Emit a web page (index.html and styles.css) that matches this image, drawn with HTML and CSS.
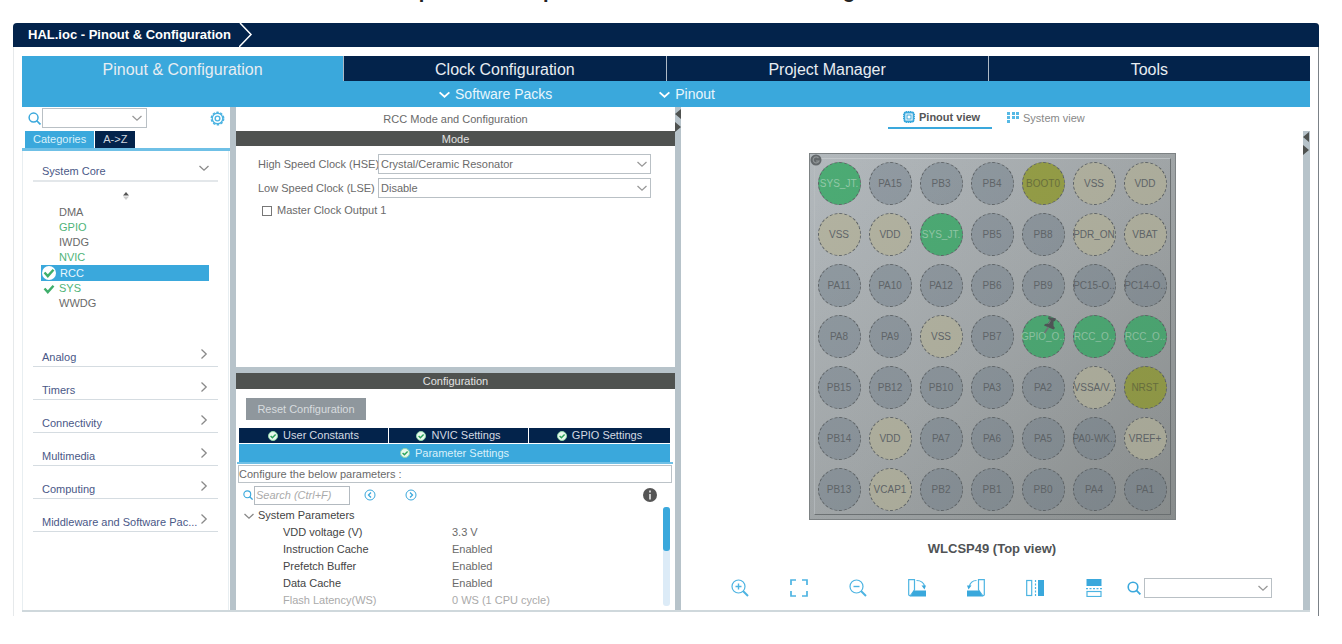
FILE: index.html
```html
<!DOCTYPE html>
<html lang="en">
<head>
<meta charset="utf-8">
<title>HAL.ioc - Pinout &amp; Configuration</title>
<link rel="stylesheet" href="styles.css">
</head>
<body>
<svg class="defs" aria-hidden="true">
  <symbol id="down" viewBox="0 0 12 12"><path d="M1.500 4l4.500 4.200L10.500 4" fill="none" stroke="currentColor" stroke-width="1.300"/></symbol>
  <symbol id="right" viewBox="0 0 12 12"><path d="M3.500 1.500L8.200 6l-4.700 4.500" fill="none" stroke="currentColor" stroke-width="1.300"/></symbol>
  <symbol id="search" viewBox="0 0 14 14"><circle cx="6" cy="6" r="4.800" fill="none" stroke="currentColor" stroke-width="1.600"/><path d="M9.400 9.400l4 4" stroke="currentColor" stroke-width="1.800"/></symbol>
  <symbol id="ok" viewBox="0 0 10 10"><circle cx="5" cy="5" r="4.500" fill="#eaf8ee" stroke="#8fd6aa"/><path d="M2.600 5l1.800 1.800L7.600 3.400" fill="none" stroke="#2aa35a" stroke-width="1.400"/></symbol>
  <symbol id="tick" viewBox="0 0 12 12"><path d="M1.500 5.500l3.300 3.600 5.700-6.400" fill="none" stroke="#3fae6b" stroke-width="2.400"/></symbol>
</svg>
<div class="heading"><span>p</span><span>p</span><span>g</span></div>
<div class="window">
  <header class="titlebar">
    <span>HAL.ioc - Pinout &amp; Configuration</span>
    <svg class="crumb" viewBox="0 0 14 24"><path d="M1 0l11 11.500L0 24" fill="none" stroke="#fff" stroke-width="1.500"/></svg>
  </header>
  <div class="content">
    <nav class="tabs">
      <button class="tab active">Pinout &amp; Configuration</button>
      <button class="tab">Clock Configuration</button>
      <button class="tab">Project Manager</button>
      <button class="tab">Tools</button>
    </nav>
    <div class="menus">
      <button class="menu"><svg viewBox="0 0 12 12"><path d="M1.500 4l4.500 4 4.500-4" fill="none" stroke="#fff" stroke-width="1.700"/></svg>Software Packs</button>
      <button class="menu"><svg viewBox="0 0 12 12"><path d="M1.500 4l4.500 4 4.500-4" fill="none" stroke="#fff" stroke-width="1.700"/></svg>Pinout</button>
    </div>
    <main class="panes">
      <aside class="side">
        <div class="side-search">
          <svg class="lens"><use href="#search"/></svg>
          <div class="combo side-combo"><input type="text" aria-label="Search peripherals"><svg class="arrow"><use href="#down"/></svg></div>
          <button class="gear" aria-label="Settings"><svg viewBox="0 0 16 16" fill="none" stroke="#4db4e2"><circle cx="8" cy="8" r="6.600" stroke-width="1.600" stroke-dasharray="2.600 1.550"/><circle cx="8" cy="8" r="5.600" stroke-width="1.400"/><circle cx="8" cy="8" r="2.500" stroke-width="1.500"/></svg></button>
        </div>
        <div class="side-tabs"><button class="on">Categories</button><button>A-&gt;Z</button></div>
        <div class="cats">
          <button class="cat first">System Core<svg><use href="#down"/></svg></button>
          <div class="sorter"><svg viewBox="0 0 8 10"><path d="M4 1l3 3.500H1z" fill="#555"/><path d="M4 9l3-3.500H1z" fill="#ccc"/></svg></div>
          <ul class="periphs">
            <li>DMA</li>
            <li class="green">GPIO</li>
            <li>IWDG</li>
            <li class="green">NVIC</li>
            <li class="selected"><i class="disc"><svg><use href="#tick"/></svg></i>RCC</li>
            <li class="green"><i><svg><use href="#tick"/></svg></i>SYS</li>
            <li>WWDG</li>
          </ul>
          <button class="cat">Analog<svg><use href="#right"/></svg></button>
          <button class="cat">Timers<svg><use href="#right"/></svg></button>
          <button class="cat">Connectivity<svg><use href="#right"/></svg></button>
          <button class="cat">Multimedia<svg><use href="#right"/></svg></button>
          <button class="cat">Computing<svg><use href="#right"/></svg></button>
          <button class="cat">Middleware and Software Pac...<svg><use href="#right"/></svg></button>
        </div>
      </aside>
      <div class="splitter"></div>
      <section class="middle">
        <div class="mode">
          <h2 class="pane-title">RCC Mode and Configuration</h2>
          <h3 class="bar">Mode</h3>
          <div class="form">
            <label for="hse">High Speed Clock (HSE)</label>
            <div class="combo"><select id="hse"><option>Crystal/Ceramic Resonator</option></select><svg class="arrow"><use href="#down"/></svg></div>
            <label for="lse">Low Speed Clock (LSE)</label>
            <div class="combo"><select id="lse"><option>Disable</option></select><svg class="arrow"><use href="#down"/></svg></div>
          </div>
          <label class="check"><input type="checkbox">Master Clock Output 1</label>
        </div>
        <div class="hsplit"></div>
        <div class="config">
          <h3 class="bar tall">Configuration</h3>
          <button class="reset">Reset Configuration</button>
          <div class="ctabs">
            <button><svg><use href="#ok"/></svg>User Constants</button>
            <button><svg><use href="#ok"/></svg>NVIC Settings</button>
            <button><svg><use href="#ok"/></svg>GPIO Settings</button>
            <button class="on"><svg><use href="#ok"/></svg>Parameter Settings</button>
          </div>
          <p class="hint">Configure the below parameters :</p>
          <div class="finder">
            <svg class="lens small"><use href="#search"/></svg>
            <input type="text" placeholder="Search (Ctrl+F)" aria-label="Search parameters">
            <button aria-label="Previous"><svg viewBox="0 0 12 12" fill="none" stroke="#3aa8dc"><circle cx="6" cy="6" r="5"/><path d="M7 3.500L4.500 6 7 8.500" stroke-width="1.300"/></svg></button>
            <button aria-label="Next"><svg viewBox="0 0 12 12" fill="none" stroke="#3aa8dc"><circle cx="6" cy="6" r="5"/><path d="M5 3.500L7.500 6 5 8.500" stroke-width="1.300"/></svg></button>
            <button class="info" aria-label="Information"><svg viewBox="0 0 14 14"><circle cx="7" cy="7" r="7" fill="#555"/><path d="M7 2.500v2M7 6v5.500" stroke="#ccc" stroke-width="2"/></svg></button>
          </div>
          <div class="params">
            <table>
              <tr><th colspan="2"><svg><use href="#down"/></svg>System Parameters</th></tr>
              <tr><td>VDD voltage (V)</td><td>3.3 V</td></tr>
              <tr><td>Instruction Cache</td><td>Enabled</td></tr>
              <tr><td>Prefetch Buffer</td><td>Enabled</td></tr>
              <tr><td>Data Cache</td><td>Enabled</td></tr>
              <tr class="off"><td>Flash Latency(WS)</td><td>0 WS (1 CPU cycle)</td></tr>
            </table>
            <div class="track"><div class="thumb"></div></div>
          </div>
        </div>
      </section>
      <div class="splitter"><svg class="grips" viewBox="0 0 6 24"><path d="M6 1v10L0 6zM0 14v10l6-5z" fill="#4f5250"/></svg></div>
      <section class="right">
        <div class="view">
          <div class="view-tabs">
            <button class="on"><svg viewBox="0 0 12 12" fill="none" stroke="#3aa8dc"><rect x="1.500" y="1.500" width="9" height="9" rx="1" stroke-width="1.800"/><rect x="4" y="4" width="4" height="4"/><path d="M3 .5h6M3 11.500h6M.5 3v6M11.500 3v6" stroke-dasharray="1 1"/></svg>Pinout view</button>
            <button><svg viewBox="0 0 12 12" fill="#56b9e5"><path d="M0 0h3v3H0zM0 4h3v3H0zM0 8h3v3H0zM5 0h3v3H5zM5 4h3v3H5zM9 0h3v3H9zM9 4h3v3H9z"/></svg>System view</button>
          </div>
          <div class="chip">
            <svg class="mark" viewBox="0 0 12 12"><circle cx="6" cy="6" r="5.500" fill="#63686b"/><path d="M8.500 4A3 3 0 1 0 9 7H6" fill="none" stroke="#8f9496" stroke-width="1.200"/></svg>
            <button class="g">SYS_JT.</button><button>PA15</button><button>PB3</button><button>PB4</button><button class="o">BOOT0</button><button class="y">VSS</button><button class="y">VDD</button>
            <button class="y">VSS</button><button class="y">VDD</button><button class="g">SYS_JT.</button><button>PB5</button><button>PB8</button><button class="y">PDR_ON</button><button class="y">VBAT</button>
            <button>PA11</button><button>PA10</button><button>PA12</button><button>PB6</button><button>PB9</button><button>PC15-O..</button><button>PC14-O..</button>
            <button>PA8</button><button>PA9</button><button class="y">VSS</button><button>PB7</button><button class="g pinned">GPIO_O..<svg viewBox="0 0 14 18"><path d="M5.500 1L13 2.500 12 5l-1.500.5L10.500 10l1.500 2-1.500 1.500L1 9.500 2 8l3-.500L7 4 5 2.500z" fill="#505557"/><path d="M5.500 11L1.500 17" stroke="#707678" stroke-width="1.600"/><path d="M7.500 4.500L5.500 8" stroke="#7d8385"/></svg></button><button class="g">RCC_O..</button><button class="g">RCC_O..</button>
            <button>PB15</button><button>PB12</button><button>PB10</button><button>PA3</button><button>PA2</button><button class="y">VSSA/V..</button><button class="o">NRST</button>
            <button>PB14</button><button class="y">VDD</button><button>PA7</button><button>PA6</button><button>PA5</button><button>PA0-WK..</button><button class="y">VREF+</button>
            <button>PB13</button><button class="y">VCAP1</button><button>PB2</button><button>PB1</button><button>PB0</button><button>PA4</button><button>PA1</button>
          </div>
          <p class="package">WLCSP49 (Top view)</p>
          <div class="tools">
            <button aria-label="Zoom in"><svg viewBox="0 0 18 18"><circle cx="7.500" cy="7.500" r="6.500"/><path d="M12 12l5 5" stroke-width="2"/><path d="M4.500 7.500h6M7.500 4.500v6" stroke-width="1.400"/></svg></button>
            <button aria-label="Fit"><svg viewBox="0 0 18 18"><path d="M1 6V1h5M12 1h5v5M17 12v5h-5M6 17H1v-5" stroke-width="1.700"/></svg></button>
            <button aria-label="Zoom out"><svg viewBox="0 0 18 18"><circle cx="7.500" cy="7.500" r="6.500"/><path d="M12 12l5 5" stroke-width="2"/><path d="M4.500 7.500h6" stroke-width="1.400"/></svg></button>
            <button aria-label="Rotate right"><svg viewBox="0 0 18 18"><path d="M6.500 11V.7H.7V16l2 1.300"/><path d="M6.500 11L2 17" /><path d="M5.500 11.500H18v6H2.500z" fill="#3aa8dc" stroke="none"/><path d="M8.500 1.500q7 0 8 6"/><path d="M13.500 6.500H18l-1.500 4z" fill="#3aa8dc" stroke="none"/></svg></button>
            <button aria-label="Rotate left"><svg viewBox="0 0 18 18"><path d="M11.500 11V.7h5.800V16l-2 1.300"/><path d="M11.500 11l4.500 6"/><path d="M12.500 11.500H0v6h15.500z" fill="#3aa8dc" stroke="none"/><path d="M9.500 1.500q-6 0-7 6"/><path d="M4.500 6.500H0l1.500 4z" fill="#3aa8dc" stroke="none"/></svg></button>
            <button aria-label="Flip horizontally"><svg viewBox="0 0 18 18"><rect x=".7" y="1.500" width="5" height="15"/><path d="M9.500 1v16" stroke-dasharray="2 1.500"/><path d="M12 1h6v16h-6z" fill="#3aa8dc" stroke="none"/></svg></button>
            <button aria-label="Flip vertically"><svg viewBox="0 0 18 18"><path d="M1.500 0h15v7h-15z" fill="#3aa8dc" stroke="none"/><path d="M1 9.700h16" stroke-dasharray="2 1.500"/><rect x="2" y="12.500" width="14" height="5"/></svg></button>
            <div class="pin-search">
              <svg class="lens"><use href="#search"/></svg>
              <div class="combo"><input type="text" aria-label="Search pins"><svg class="arrow"><use href="#down"/></svg></div>
            </div>
          </div>
        </div>
        <div class="edge"><svg class="grips" viewBox="0 0 6 24"><path d="M6 1v10L0 6zM0 14v10l6-5z" fill="#4f5250"/></svg></div>
      </section>
    </main>
  </div>
</div>
</body>
</html>
```
FILE: styles.css
```css
* { box-sizing: border-box; }
body {
  margin: 0;
  background: #fff;
  color: #6a6a6a;
  font: 11px/15px "Liberation Sans", Arial, sans-serif;
}
button, input, select { font: inherit; color: inherit; margin: 0; }
button { border: 0; padding: 0; background: none; cursor: pointer; }
h2, h3, p, ul { margin: 0; padding: 0; font-size: 11px; font-weight: normal; }
ul { list-style: none; }
svg { display: block; flex: none; }
.defs { display: none; }

.heading {
  display: flex;
  align-items: flex-end;
  justify-content: center;
  gap: 112px;
  height: 2px;
  margin-bottom: 21px;
  padding-right: 68px;
  overflow: hidden;
  color: #222;
  font: bold 20px/22px "Liberation Sans", Arial, sans-serif;
}
.heading span:last-child { padding-left: 176px; }

.window {
  margin: 0 23px 28px 13px;
  border: 1px solid #e6e9eb;
  border-top: 0;
  border-right-color: #7b8187;
  border-bottom: 0;
  border-radius: 4px 4px 0 0;
}
.titlebar {
  display: flex;
  gap: 8px;
  height: 24px;
  margin: 0 -1px;
  padding-left: 15px;
  background: #03234b;
  border-radius: 4px 4px 0 0;
  color: #fff;
  font: bold 13px/24px "Liberation Sans", Arial, sans-serif;
}
.crumb { width: 14px; height: 24px; }
.content { padding: 9px 8px 4px; }

.tabs { display: grid; grid-template-columns: repeat(4, 1fr); gap: 1px; background: #aeb9c5; }
.tab { height: 25px; padding-top: 2px; background: #03234b; color: #e8edf2; font-size: 16px; line-height: 23px; }
.tab.active { background: #3aa8dc; }
.menus {
  display: flex;
  gap: 106px;
  height: 26px;
  padding-left: 32.3%;
  background: #3aa8dc;
}
.menu { display: flex; align-items: center; gap: 4px; color: #e9f6fc; font-size: 14px; }
.menu svg { width: 13px; height: 13px; }

.panes {
  display: grid;
  grid-template-columns: 208px 6px 439px 6px minmax(0, 1fr);
  border-bottom: 2px solid #cfd8dc;
}
.splitter, .hsplit, .edge { background: #b7c3ca; }
.hsplit { height: 6px; }
.grips { width: 6px; height: 24px; }
.splitter .grips { margin-top: 1px; }
.lens { width: 13px; height: 13px; color: #3aa8dc; }

.combo { position: relative; height: 20px; }
.combo input, .combo select {
  display: block;
  width: 100%;
  height: 100%;
  padding: 0 2px;
  border: 1px solid #b9c0c5;
  border-radius: 0;
  background: #fff;
  appearance: none;
  outline: 0;
}
.arrow { position: absolute; right: 3px; top: 4px; width: 12px; height: 12px; color: #999; pointer-events: none; }

.side { display: flex; flex-direction: column; }
.side-search { display: flex; align-items: center; gap: 1px; height: 24px; padding: 0 5px 2px 6px; }
.side-combo { width: 105px; }
.side-combo .arrow { right: 4px; }
.gear { margin-left: auto; }
.gear svg { width: 15px; height: 15px; }
.side-tabs { display: flex; gap: 1px; padding: 0 3px; border-bottom: 3px solid #6fc0e6; }
.side-tabs button { height: 17px; padding: 0 8px; background: #03234b; color: #cfd6df; }
.side-tabs .on { background: #3aa8dc; color: #d9f0fa; }
.cats { flex: 1; padding: 0 10px; margin-right: 1px; border: solid #e8eef1; border-width: 0 1px; }
.cat {
  display: flex;
  align-items: flex-end;
  justify-content: space-between;
  width: 100%;
  height: 33px;
  padding: 0 8px 1px 9px;
  border-bottom: 1px solid #d5dce1;
  color: #4a5887;
  white-space: nowrap;
}
.cat svg { width: 12px; height: 12px; margin-bottom: 5px; color: #8a8a8a; }
.cat.first { height: 31px; border-bottom: 2px solid #e3e7ea; }
.sorter { height: 22px; padding-top: 9px; }
.sorter svg { width: 8px; height: 10px; margin: 0 auto; }
.periphs { padding: 1px 9px 23px 8px; }
.periphs li { display: flex; align-items: center; height: 15px; padding-left: 18px; position: relative; }
.periphs .green { color: #4fb478; }
.periphs .selected { height: 16px; background: #3aa8dc; color: #e9f6fc; padding-left: 19px; }
.periphs i { position: absolute; left: 1px; top: 1px; padding: 1px; border-radius: 50%; }
.periphs .disc { background: #fff; }
.periphs svg { width: 12px; height: 12px; }

.pane-title { height: 24px; line-height: 25px; text-align: center; }
.bar { height: 15px; line-height: 16px; background: #4f5250; color: #e2e2e2; text-align: center; }
.tall { height: 16px; line-height: 17px; }
.mode { height: 260px; }
.form {
  display: grid;
  grid-template-columns: 120px minmax(0, 1fr);
  gap: 4px 0;
  align-items: center;
  padding: 8px 24px 0 22px;
}
.form label { white-space: nowrap; }
.check { display: flex; align-items: center; gap: 5px; padding: 5px 0 0 26px; }
.check input { width: 10px; height: 10px; appearance: none; border: 1px solid #777; background: #fff; }
.reset { display: block; width: 120px; height: 22px; margin: 9px 0 8px 10px; background: #8f979d; color: #d8dcdf; }
.ctabs {
  display: grid;
  grid-template-columns: 149px 139px minmax(0, 1fr);
  gap: 1px;
  margin: 0 2px 0 1px;
  padding: 0 3px 0 2px;
  border-bottom: 2px solid #6fc0e6;
}
.ctabs button { display: flex; align-items: center; justify-content: center; gap: 5px; height: 15px; background: #03234b; color: #d4dae2; }
.ctabs .on { grid-column: 1 / -1; height: 18px; background: #3aa8dc; color: #d9f0fa; }
.ctabs svg { width: 10px; height: 10px; }
.hint { height: 18px; margin: 1px 3px 0 2px; border: 1px solid #bcc3c8; line-height: 16px; }
.finder { display: flex; align-items: center; height: 24px; padding: 0 18px 0 7px; }
.small { width: 10px; height: 10px; margin-right: 1px; }
.finder input { width: 96px; height: 19px; margin-right: 14px; padding: 0 1px; border: 1px solid #b3bac0; font-style: italic; font-size: 11px; border-radius: 0; }
.finder input::placeholder { color: #aaa; opacity: 1; }
.finder button { margin-right: 29px; }
.finder button svg { width: 12px; height: 12px; }
.finder .info { margin: 0 0 0 auto; }
.finder .info svg { width: 14px; height: 14px; }
.params { display: flex; justify-content: space-between; padding-right: 5px; }
table { border-collapse: collapse; width: 400px; table-layout: fixed; }
td, th { height: 17px; padding: 0; font-weight: normal; text-align: left; }
th { padding-left: 7px; color: #444; }
th svg { display: inline-block; width: 12px; height: 12px; margin-right: 3px; vertical-align: -3px; color: #888; }
td:first-child { padding-left: 47px; color: #444; }
td:last-child { padding-left: 16px; }
tr.off td { color: #aaa; }
.track { width: 7px; height: 99px; background: #dcebf7; border-radius: 3px; }
.thumb { height: 44px; background: #3aa8dc; border-radius: 3px; }

.right { display: flex; }
.view { flex: 1; }
.edge { width: 7px; margin-top: 24px; }
.view-tabs { display: flex; justify-content: center; }
.view-tabs button { display: flex; align-items: center; gap: 4px; width: 104px; height: 22px; padding-left: 15px; color: #888; }
.view-tabs .on { border-bottom: 2px solid #3aa8dc; color: #555; font-weight: bold; }
.view-tabs svg { width: 12px; height: 12px; }
.chip {
  position: relative;
  display: grid;
  grid-template-columns: repeat(7, 43px);
  grid-auto-rows: 43px;
  gap: 8px;
  width: max-content;
  margin: 24px auto 0;
  padding: 8px;
  border: 1px solid #7d8284;
  background: linear-gradient(135deg, #b3b9bd, #a6abad 50%, #929696);
}
.chip::before {
  content: "";
  position: absolute;
  inset: 4px;
  border: 1px solid;
  border-color: #c3c8cb #6f7476 #6f7476 #b8bdc0;
}
.chip::after {
  content: "";
  position: absolute;
  inset: 0;
  background: linear-gradient(135deg, rgba(60,65,65,0), rgba(60,65,65,.12));
  pointer-events: none;
}
.chip button {
  position: relative;
  display: flex;
  align-items: center;
  justify-content: center;
  border: 1px dashed #5d6265;
  border-radius: 50%;
  background: rgba(122,134,145,.56);
  color: #61666a;
  font-size: 10px;
  white-space: nowrap;
}
.chip .g { background: #4cab74; color: #93c9a8; }
.chip .o { background: #969f46; color: #6a713c; }
.chip .y { background: #b3b3a1; }
.chip .mark { position: absolute; left: 0; top: 0; width: 12px; height: 12px; }
.pinned svg { position: absolute; left: 20px; top: 0; width: 14px; height: 18px; }
.package { margin-top: 20px; color: #505355; font-weight: bold; font-size: 13px; line-height: 18px; text-align: center; }
.tools { display: flex; justify-content: center; align-items: center; gap: 41px; padding: 20px 0 12px 19px; }
.tools button svg { width: 18px; height: 18px; fill: none; stroke: #4db4e2; stroke-width: 1.2; }
.pin-search { display: flex; align-items: center; gap: 3px; margin-left: -17px; }
.pin-search .lens { width: 14px; height: 14px; }
.pin-search .combo { width: 128px; }
```
